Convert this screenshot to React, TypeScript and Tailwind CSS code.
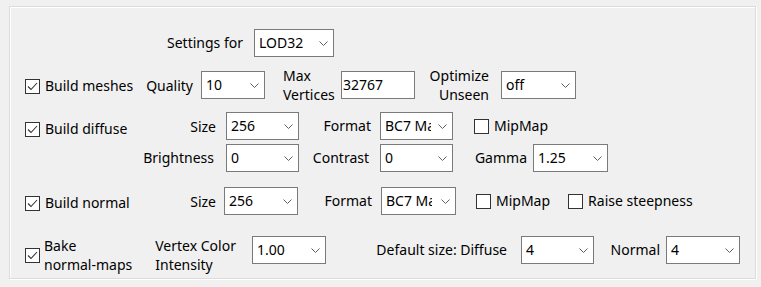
import React from "react";

type ComboProps = { value: string; w: string; clip?: string };

const Combo = ({ value, w, clip }: ComboProps) => (
    <div className={`${w} h-[28px] shrink-0 flex items-center bg-white border border-[#7a7a7a] pl-[4px] pr-[5px]`}>
        <span className={`flex-1 overflow-hidden whitespace-nowrap ${clip ?? ""}`}>{value}</span>
        <svg width="9" height="5" viewBox="0 0 9 5" className="shrink-0 ml-auto">
            <path d="M0.5 0.5 L4.5 4.5 L8.5 0.5" fill="none" stroke="#606060" strokeWidth="1"/>
        </svg>
    </div>
);

const Check = ({ checked }: { checked?: boolean }) => (
    <div className="w-[15px] h-[15px] shrink-0 bg-white border border-[#333333] flex items-center justify-center">
        {checked && (
            <svg width="11" height="9" viewBox="0 0 11 9">
                <path d="M1 4.5 L4 7.5 L10 1" fill="none" stroke="#333333" strokeWidth="1.1"/>
            </svg>
        )}
    </div>
);

const CheckLabel = ({ checked, children, className }: { checked?: boolean; children: React.ReactNode; className?: string }) => (
    <div className={`flex items-center gap-[5px] ${className ?? ""}`}>
        <Check checked={checked}/>
        <span className="whitespace-nowrap">{children}</span>
    </div>
);

export default function App() {
    return (
        <div className="w-[761px] h-[287px] bg-[#f0f0f0] pt-[6px] pl-[9px] text-black text-[14px] leading-[20px]"
             style={{fontFamily: '"Noto Sans", "Open Sans", sans-serif'}}>
            <div className="w-[747px] h-[273px] border border-[#dcdcdc] shadow-[inset_1px_1px_0_#ffffff,1px_1px_0_#ffffff] flex flex-col">
                {/* settings for */}
                <div className="h-[28px] flex items-center mt-[22px]">
                    <div className="w-[244px] text-right pr-[11px]">Settings for</div>
                    <Combo value="LOD32" w="w-[80px]"/>
                </div>

                {/* meshes */}
                <div className="h-[28px] flex items-center mt-[14px]">
                    <div className="w-[191px] flex items-center justify-between pr-[8px]">
                        <CheckLabel checked className="ml-[15px] mt-[2px]">Build meshes</CheckLabel>
                        <span className="mt-[2px]">Quality</span>
                    </div>
                    <Combo value="10" w="w-[64px]"/>
                    <div className="w-[76px] pl-[18px] leading-[19px]">Max<br/>Vertices</div>
                    <div className="w-[74px] h-[28px] bg-white border border-[#7a7a7a] pl-[1px] flex items-center">32767</div>
                    <div className="w-[86px] pr-[12px] text-right leading-[19px]">Optimize<br/>Unseen</div>
                    <Combo value="off" w="w-[75px]"/>
                </div>

                {/* diffuse */}
                <div className="h-[28px] flex items-center mt-[13px]">
                    <div className="w-[216px] flex items-center justify-between pr-[10px]">
                        <CheckLabel checked className="ml-[15px] mt-[6px]">Build diffuse</CheckLabel>
                        <span className="mt-[1px]">Size</span>
                    </div>
                    <Combo value="256" w="w-[73px]"/>
                    <div className="w-[81px] text-right pr-[9px]">Format</div>
                    <Combo value="BC7 Max Quality" w="w-[73px]" clip="max-w-[46px]"/>
                    <CheckLabel className="ml-[21px]">MipMap</CheckLabel>
                </div>
                <div className="h-[28px] flex items-center mt-[4px]">
                    <div className="w-[216px] text-right pr-[12px]">Brightness</div>
                    <Combo value="0" w="w-[73px]"/>
                    <div className="w-[81px] text-right pr-[11px]">Contrast</div>
                    <Combo value="0" w="w-[73px]"/>
                    <div className="w-[80px] text-right pr-[6px]">Gamma</div>
                    <Combo value="1.25" w="w-[75px]"/>
                </div>

                {/* normal */}
                <div className="h-[28px] flex items-center mt-[15px]">
                    <div className="w-[214px] flex items-center justify-between pr-[8px]">
                        <CheckLabel checked className="ml-[15px] mt-[4px]">Build normal</CheckLabel>
                        <span className="mt-[2px]">Size</span>
                    </div>
                    <Combo value="256" w="w-[74px]"/>
                    <div className="w-[83px] text-right pr-[9px]">Format</div>
                    <Combo value="BC7 Max Quality" w="w-[75px]" clip="max-w-[46px]"/>
                    <CheckLabel className="ml-[20px]">MipMap</CheckLabel>
                    <CheckLabel className="ml-[18px]">Raise steepness</CheckLabel>
                </div>

                {/* bake */}
                <div className="h-[28px] flex items-center mt-[21px]">
                    <div className="w-[242px] flex items-center">
                        <div className="flex items-center gap-[4px] ml-[15px] mt-[10px]">
                            <Check checked/>
                            <span className="leading-[19px]">Bake<br/>normal-maps</span>
                        </div>
                        <div className="ml-[23px] leading-[19px] mt-[10px]">Vertex Color<br/>Intensity</div>
                    </div>
                    <Combo value="1.00" w="w-[74px]"/>
                    <div className="w-[195px] text-right pr-[14px] whitespace-nowrap">Default size: Diffuse</div>
                    <Combo value="4" w="w-[73px]"/>
                    <div className="w-[72px] text-right pr-[6px]">Normal</div>
                    <Combo value="4" w="w-[74px]"/>
                </div>
            </div>
        </div>
    );
}
